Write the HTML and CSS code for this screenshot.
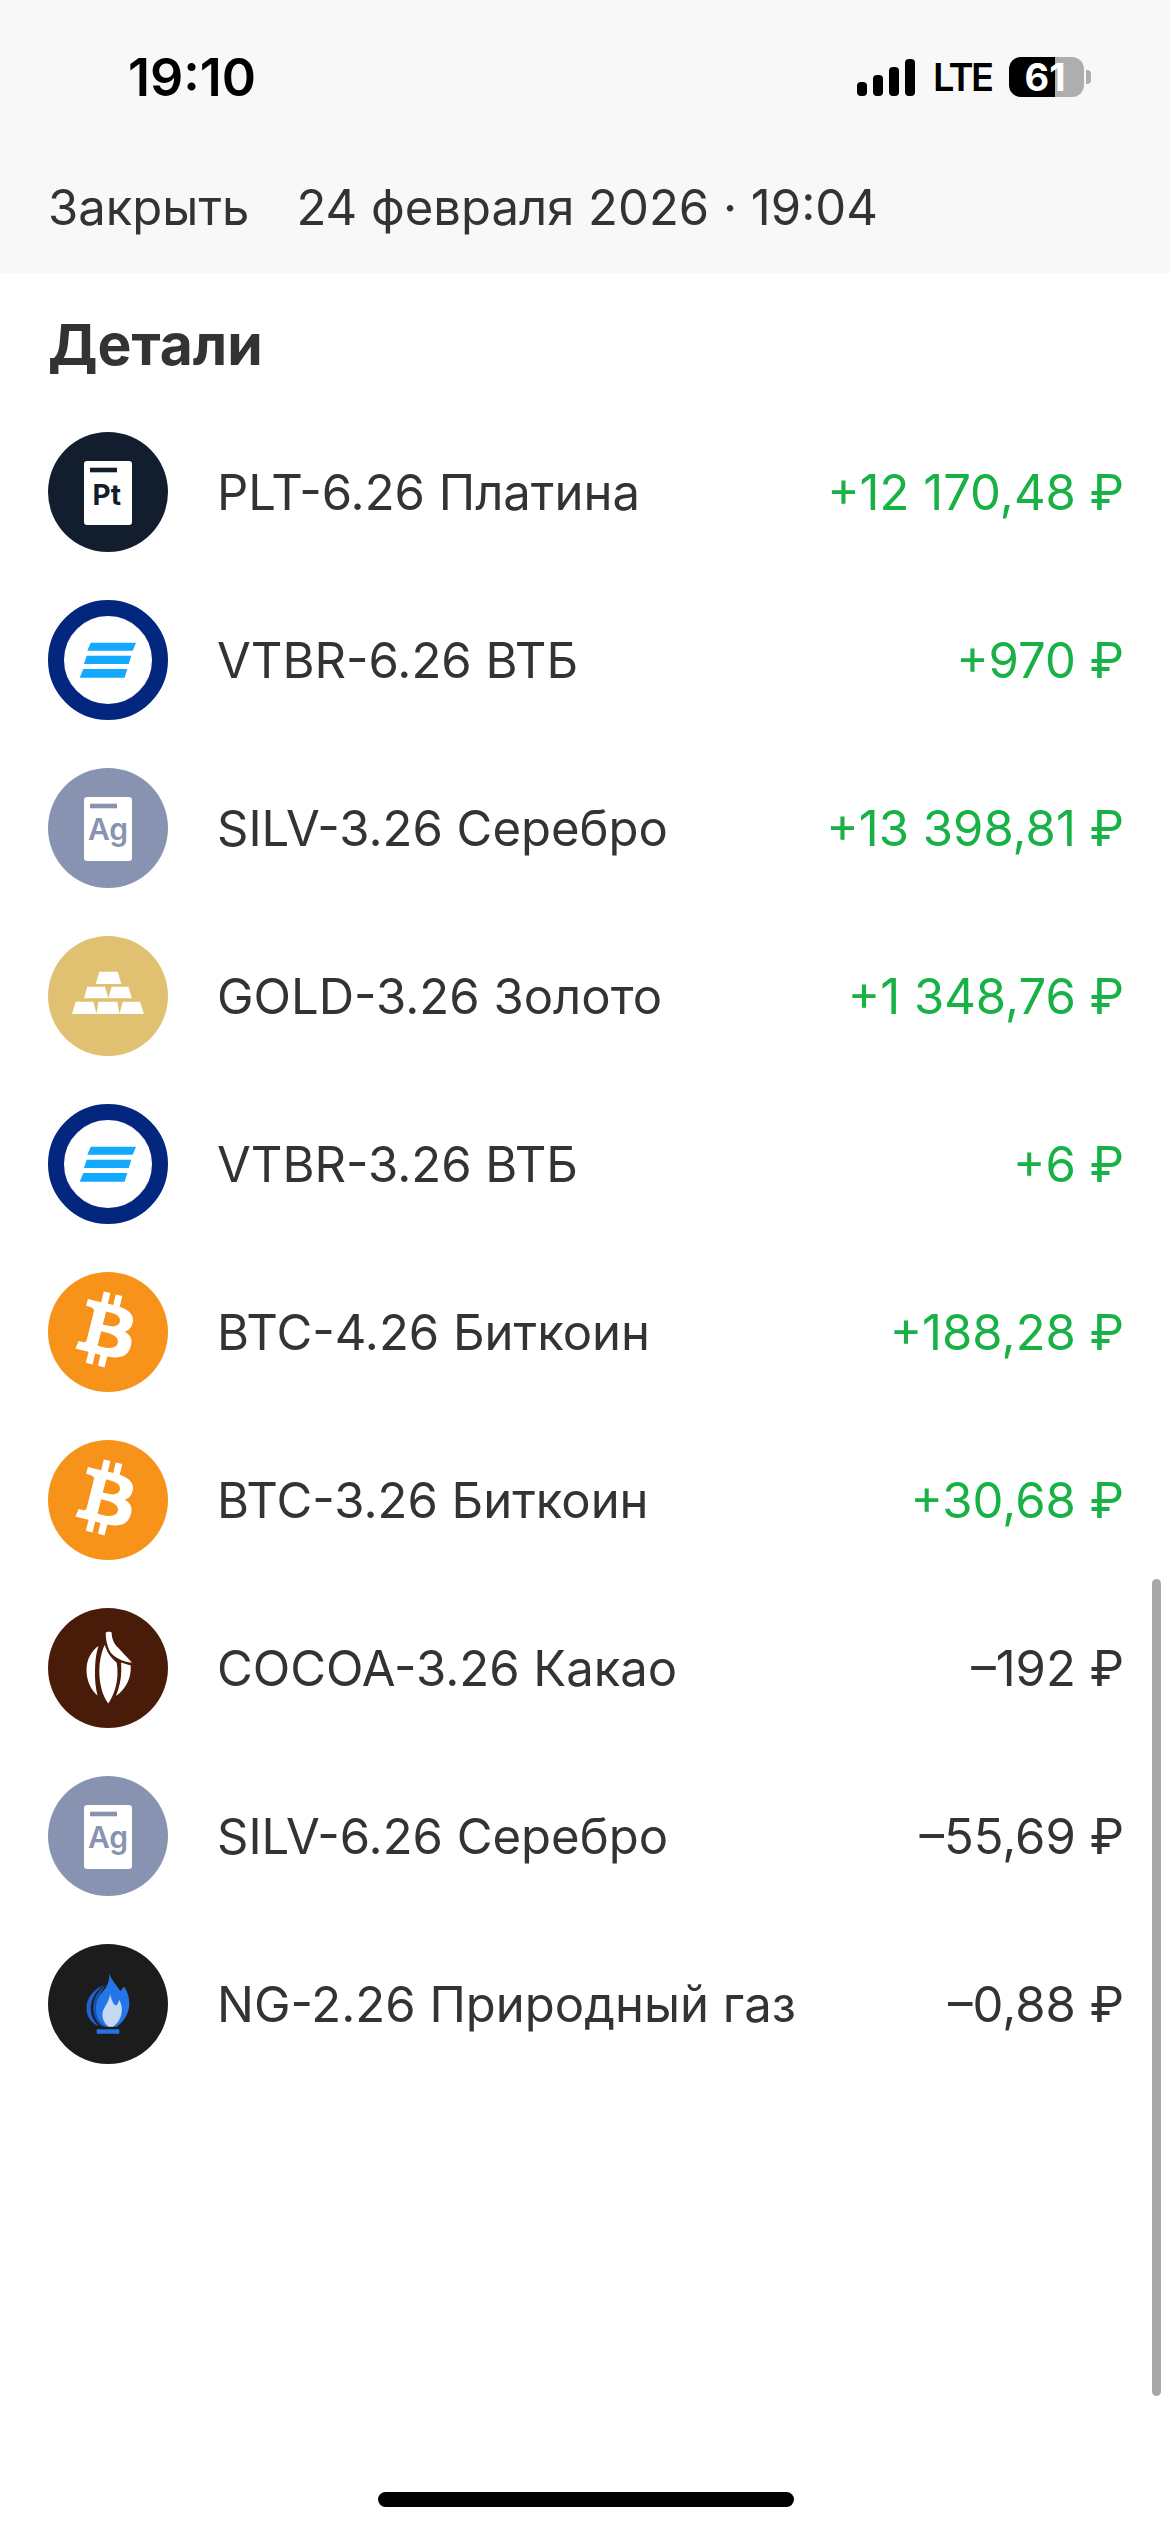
FILE: index.html
```html
<!DOCTYPE html>
<html lang="ru">
<head>
    <meta charset="UTF-8">
    <meta name="viewport" content="width=device-width, initial-scale=1.0">
    <title>Детали</title>
    <link rel="stylesheet" href="styles.css">
</head>
<body>

    <svg class="defs" width="0" height="0">
        <symbol id="vtb" viewBox="0 0 120 120">
            <circle cx="60" cy="60" r="52" fill="#fff" stroke="#03277f" stroke-width="16"/>
            <path fill="#12a9ff" d="M42.7 42.7H88L84.7 50.7H39.3Z M38.7 55.7H83.3L80.7 64H36Z M35.3 69H79.3L76.7 77.7H31.7Z"/>
        </symbol>
        <symbol id="btc" viewBox="0 0 120 120">
            <circle cx="60" cy="60" r="60" fill="#f7931a"/>
            <path fill="#fff" fill-rule="evenodd" transform="translate(-1.6 -1.5) scale(5)" d="M17.288 10.291c.24-1.59-.974-2.45-2.64-3.03l.54-2.153-1.315-.33-.525 2.107c-.345-.087-.705-.167-1.064-.25l.526-2.127-1.32-.33-.54 2.165c-.285-.067-.565-.132-.84-.2l-1.815-.45-.35 1.407s.975.225.955.236c.535.136.63.486.615.766l-1.477 5.92c-.075.166-.24.406-.614.314.015.02-.96-.24-.96-.24l-.66 1.51 1.71.426.93.242-.54 2.19 1.32.327.54-2.17c.36.1.705.19 1.05.273l-.51 2.154 1.32.33.545-2.19c2.24.427 3.93.257 4.64-1.774.57-1.637-.03-2.58-1.217-3.196.854-.193 1.5-.76 1.68-1.93h.01zm-3.01 4.22c-.404 1.64-3.157.75-4.05.53l.72-2.9c.896.23 3.757.67 3.33 2.37zm.41-4.24c-.37 1.49-2.662.735-3.405.55l.654-2.64c.744.18 3.137.524 2.75 2.084v.006z"/>
        </symbol>
    </svg>

    <div class="top">
        <div class="status">
            <span class="time">19:10</span>
            <div class="status-right">
                <div class="signal">
                    <i class="s1"></i><i class="s2"></i><i class="s3"></i><i class="s4"></i>
                </div>
                <span class="lte">LTE</span>
                <div class="battery"><span>61</span></div>
                <div class="battery-cap"></div>
            </div>
        </div>
        <div class="nav">
            <span>Закрыть</span>
            <span>24 февраля 2026 · 19:04</span>
        </div>
    </div>

    <h1 class="title">Детали</h1>

    <div class="list">
        <div class="row">
            <svg class="icon" viewBox="0 0 120 120">
                <circle cx="60" cy="60" r="60" fill="#121e2d"/>
                <rect x="36" y="29" width="48" height="64" rx="3" fill="#fff"/>
                <rect x="42" y="35.7" width="27" height="4.6" fill="#121e2d"/>
                <text x="58.7" y="73" class="metal-text" fill="#121e2d">Pt</text>
            </svg>
            <span class="name">PLT-6.26 Платина</span>
            <span class="sum plus">+12 170,48 ₽</span>
        </div>
        <div class="row">
            <svg class="icon"><use href="#vtb"/></svg>
            <span class="name">VTBR-6.26 ВТБ</span>
            <span class="sum plus">+970 ₽</span>
        </div>
        <div class="row">
            <svg class="icon" viewBox="0 0 120 120">
                <circle cx="60" cy="60" r="60" fill="#8793b1"/>
                <rect x="36" y="29" width="48" height="64" rx="3" fill="#fff"/>
                <rect x="42" y="35.7" width="27" height="4.6" fill="#8793b1"/>
                <text x="60" y="71.5" class="metal-text ag" fill="#8793b1">Ag</text>
            </svg>
            <span class="name">SILV-3.26 Серебро</span>
            <span class="sum plus">+13 398,81 ₽</span>
        </div>
        <div class="row">
            <svg class="icon" viewBox="0 0 120 120">
                <circle cx="60" cy="60" r="60" fill="#e0c071"/>
                <path fill="#fff" d="M51.3 35.7H69.7L73.3 48H47.7Z M39.3 50.7H57L60.3 62.3H36Z M63.7 50.7H80.3L84 62.3H60.3Z M27.7 65.7H45.3L48.7 78H24Z M50.3 65.7H69.3L71.5 78H48.7Z M74.7 65.7H92L96 78H71.5Z"/>
            </svg>
            <span class="name">GOLD-3.26 Золото</span>
            <span class="sum plus">+1 348,76 ₽</span>
        </div>
        <div class="row">
            <svg class="icon"><use href="#vtb"/></svg>
            <span class="name">VTBR-3.26 ВТБ</span>
            <span class="sum plus">+6 ₽</span>
        </div>
        <div class="row">
            <svg class="icon"><use href="#btc"/></svg>
            <span class="name">BTC-4.26 Биткоин</span>
            <span class="sum plus">+188,28 ₽</span>
        </div>
        <div class="row">
            <svg class="icon"><use href="#btc"/></svg>
            <span class="name">BTC-3.26 Биткоин</span>
            <span class="sum plus">+30,68 ₽</span>
        </div>
        <div class="row">
            <svg class="icon" viewBox="0 0 120 120">
                <circle cx="60" cy="60" r="60" fill="#481c09"/>
                <path fill="#fff" d="M50.5 38C43 43 38.5 52 38.5 62C38.5 73 43 82 49.5 87.5C47.5 80 46.8 71 47 62C47.2 53 48 45 50.5 38Z M56.5 37C53 45 51.3 54 51.3 63C51.3 75 54 87 60.3 95.5C66 87 69.5 76 69.5 65C69.5 60 69.2 57 68.5 54.5C64 51 60 46 57.5 39Z M73 54.5L82.7 57.5C83.5 70 78 81 68 88C71.5 79 73.3 70 73.3 62C73.3 59 73.2 57 73 54.5Z M57.7 25C58 23.5 63 23.5 63.7 24.7C63.5 30 66 36 70 39.5C74 44 79 49 84 54.8C76 54 67 50 63 45C59.5 40 57.8 32 57.7 25Z"/>
            </svg>
            <span class="name">COCOA-3.26 Какао</span>
            <span class="sum">–192 ₽</span>
        </div>
        <div class="row">
            <svg class="icon" viewBox="0 0 120 120">
                <circle cx="60" cy="60" r="60" fill="#8793b1"/>
                <rect x="36" y="29" width="48" height="64" rx="3" fill="#fff"/>
                <rect x="42" y="35.7" width="27" height="4.6" fill="#8793b1"/>
                <text x="60" y="71.5" class="metal-text ag" fill="#8793b1">Ag</text>
            </svg>
            <span class="name">SILV-6.26 Серебро</span>
            <span class="sum">–55,69 ₽</span>
        </div>
        <div class="row">
            <svg class="icon" viewBox="0 0 120 120">
                <circle cx="60" cy="60" r="60" fill="#1c1c1c"/>
                <path fill="#1f62c8" d="M56 41C46 45 38.5 53 38.5 64C38.5 73 43 79 51 82.5C45 76 42 70 43 62C44 53 49 46 56 41Z"/>
                <path fill="#1a4fa8" d="M58 41C50 46 45 54 45 64C45 72 48 78 54 82.5H56C50 76 47.5 66 50 56C52 49 55 45 58 41Z"/>
                <path fill="#2475e8" d="M61.3 29.3C63 35 66 38 68 41C70 44 71.5 46 72.5 47C73.5 45.5 75 44 76 42.7C79.5 47 81.5 54 81.3 60C81 71 74.5 78.5 68.7 82.7H57C50 78 47.5 70 48 63C48.5 55 53 49 57 45C60 41 61.5 36 61.3 29.3Z"/>
                <path fill="#c5d9f2" d="M62 50C63 54 64.5 58 66 60.5L68.7 61.5C69.5 60 70.5 58 71.3 56C73.5 60 74.3 64 73.7 68C73 75 69 80 65 82.7H60.5C56 79 53.8 74 54.5 69C55 64 61 59 62 50Z"/>
                <rect x="48.7" y="85.3" width="22.6" height="4.4" fill="#2475e8"/>
            </svg>
            <span class="name">NG-2.26 Природный газ</span>
            <span class="sum">–0,88 ₽</span>
        </div>
    </div>

    <div class="scrollbar"></div>
    <div class="home-bar"></div>

</body>
</html>
```

FILE: styles.css
```css
* {
    box-sizing: border-box;
    margin: 0;
    padding: 0;
}

body {
    width: 1170px;
    height: 2532px;
    overflow: hidden;
    position: relative;
    background: #fff;
    font-family: Inter, "Noto Sans", sans-serif;
    color: #333;
}

.defs {
    position: absolute;
}

.top {
    height: 273px;
    background: #f8f8f8;
}

.status {
    height: 156px;
    padding: 49px 0 0 128px;
    display: flex;
    justify-content: space-between;
    align-items: flex-start;
    color: #000;
}

.time {
    font-size: 52px;
    line-height: 58px;
    font-weight: 600;
}

.status-right {
    display: flex;
    align-items: center;
    margin-top: 8px;
    padding-right: 79px;
}

.signal {
    display: flex;
    align-items: flex-end;
    gap: 6px;
    height: 37px;
}

.signal i {
    display: block;
    width: 10px;
    border-radius: 4px;
    background: #000;
}

.s1 { height: 14px; }
.s2 { height: 21px; }
.s3 { height: 29px; }
.s4 { height: 37px; }

.lte {
    width: 57px;
    margin-left: 18px;
    font-size: 38px;
    line-height: 40px;
    font-weight: 600;
    letter-spacing: -2.5px;
    white-space: nowrap;
}

.battery {
    margin-left: 19px;
    padding-right: 3px;
    width: 75px;
    height: 40px;
    border-radius: 12px;
    background: linear-gradient(to right, #000 61%, #aeaeae 61%);
    color: #fff;
    font-size: 38px;
    line-height: 40px;
    font-weight: 700;
    text-align: center;
}

.battery-cap {
    width: 5px;
    height: 14px;
    margin-left: 2px;
    border-radius: 0 4px 4px 0;
    background: #aeaeae;
}

.nav {
    display: flex;
    gap: 47px;
    padding-left: 48px;
    font-size: 49px;
    line-height: 60px;
    margin-top: 22px;
}

.title {
    margin: 39px 0 0 48px;
    font-size: 57px;
    line-height: 66px;
    font-weight: 700;
}

.list {
    margin-top: 30px;
}

.row {
    height: 168px;
    padding: 0 46px 0 48px;
    display: flex;
    align-items: center;
    font-size: 49px;
}

.icon {
    width: 120px;
    height: 120px;
    flex-shrink: 0;
}

.metal-text {
    font-family: Inter, sans-serif;
    font-size: 28px;
    font-weight: 700;
    text-anchor: middle;
}

.ag {
    font-size: 30px;
    font-weight: 600;
}

.name {
    margin-left: 49px;
}

.sum {
    margin-left: auto;
}

.plus {
    color: #17b145;
}

.scrollbar {
    position: absolute;
    left: 1152px;
    top: 1579px;
    width: 9px;
    height: 817px;
    border-radius: 5px;
    background: #a8a8a8;
}

.home-bar {
    position: absolute;
    left: 378px;
    top: 2492px;
    width: 416px;
    height: 15px;
    border-radius: 8px;
    background: #000;
}
```
